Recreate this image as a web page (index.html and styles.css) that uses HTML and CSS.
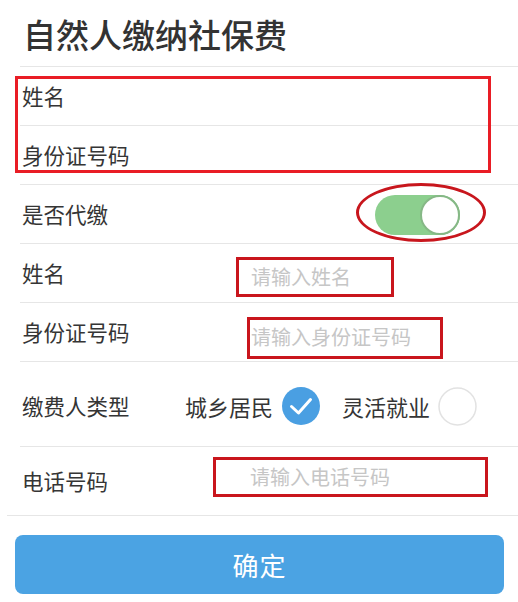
FILE: index.html
```
<!DOCTYPE html>
<html lang="zh-CN">
<head>
    <meta charset="UTF-8">
    <meta name="viewport" content="width=device-width, initial-scale=1.0">
    <title>自然人缴纳社保费</title>
    <link rel="stylesheet" href="styles.css">
</head>
<body>
    <h1 class="title">自然人缴纳社保费</h1>

    <div class="group">
        <div class="row"><span class="label">姓名</span></div>
        <div class="row"><span class="label">身份证号码</span></div>
        <span class="mark-box"></span>
    </div>

    <div class="row">
        <span class="label">是否代缴</span>
        <div class="switch-wrap">
            <span class="switch"><span class="knob"></span></span>
            <span class="mark-ellipse"></span>
        </div>
    </div>

    <div class="row">
        <span class="label">姓名</span>
        <div class="field field-name">请输入姓名</div>
    </div>

    <div class="row">
        <span class="label">身份证号码</span>
        <div class="field field-id">请输入身份证号码</div>
    </div>

    <div class="row row-tall">
        <span class="label label-short">缴费人类型</span>
        <div class="options">
            <span class="option">城乡居民</span>
            <svg class="radio" width="38" height="38" viewBox="0 0 38 38">
                <circle cx="19" cy="19" r="19" fill="#4a9fe2"/>
                <polyline points="9.5,19.5 16.5,26 28.5,12.5" fill="none" stroke="#fff" stroke-width="3" stroke-linecap="round" stroke-linejoin="round"/>
            </svg>
            <span class="option option-gap">灵活就业</span>
            <svg class="radio" width="39" height="39" viewBox="0 0 39 39">
                <circle cx="19.5" cy="19.5" r="18.5" fill="#fff" stroke="#e2e2e2" stroke-width="1.5"/>
            </svg>
        </div>
    </div>

    <div class="row row-last">
        <span class="label">电话号码</span>
        <div class="field field-phone">请输入电话号码</div>
    </div>

    <button class="submit">确定</button>
</body>
</html>
```

FILE: styles.css
```
body {
    margin: 0;
    background-color: #fff;
    color: #333;
    font-family: "Noto Sans CJK SC", "Noto Sans", sans-serif;
}
.title {
    margin: 0 0 0 20px;
    padding: 18px 0 0 3px;
    height: 67px;
    box-sizing: border-box;
    font-size: 33px;
    line-height: 32px;
    font-weight: 500;
    color: #333;
    border-bottom: 1px solid #e6e6e6;
}
.group {
    position: relative;
}
.row {
    display: flex;
    align-items: center;
    height: 58px;
    margin-left: 20px;
    border-bottom: 1px solid #e6e6e6;
}
.row-tall {
    height: 84px;
}
.row-last {
    height: 68px;
    margin-left: 7px;
    padding-left: 13px;
}
.label {
    flex: none;
    width: 192px;
    padding-left: 2px;
    font-size: 21.5px;
    line-height: 24px;
    color: #353535;
}
.label-short {
    width: 163px;
    margin-top: 4px;
}
.mark-box {
    position: absolute;
    left: 15px;
    top: 9px;
    width: 476px;
    height: 97px;
    box-sizing: border-box;
    border: 3px solid #e91d25;
}
.switch-wrap {
    position: relative;
    margin-left: 161px;
    margin-top: 2px;
}
.switch {
    display: block;
    position: relative;
    width: 85px;
    height: 40px;
    border-radius: 20px;
    background-color: #8ccf8e;
}
.knob {
    position: absolute;
    right: 0;
    top: 0;
    width: 40px;
    height: 40px;
    box-sizing: border-box;
    border-radius: 50%;
    background-color: #fff;
    border: 2px solid #86b886;
}
.mark-ellipse {
    position: absolute;
    left: -19px;
    top: -12px;
    width: 130px;
    height: 59px;
    box-sizing: border-box;
    border: 3px solid #c8161d;
    border-radius: 50%;
}
.field {
    box-sizing: border-box;
    height: 40px;
    border: 3px solid #c9161d;
    font-size: 20px;
    line-height: 34px;
    color: #c6c6c6;
    white-space: nowrap;
}
.field-name {
    margin: 8px 0 0 22px;
    width: 158px;
    padding-left: 12px;
}
.field-id {
    margin: 11px 0 0 33px;
    width: 196px;
    height: 42px;
    padding-left: 1px;
}
.field-phone {
    margin: 0 0 8px -1px;
    width: 275px;
    padding-left: 34px;
}
.options {
    display: flex;
    align-items: center;
    margin-top: 4px;
}
.option {
    font-size: 22px;
    line-height: 24px;
    color: #353535;
    margin-right: 9px;
}
.option-gap {
    margin-left: 22px;
    margin-right: 8px;
}
.radio {
    display: block;
}
.submit {
    display: block;
    width: 489px;
    height: 59px;
    margin: 19px 0 0 15px;
    padding: 0;
    border: none;
    border-radius: 8px;
    background-color: #4ba3e3;
    color: #fff;
    font-family: "Noto Sans CJK SC", "Noto Sans", sans-serif;
    font-size: 26px;
    letter-spacing: 1px;
    cursor: pointer;
}
```
